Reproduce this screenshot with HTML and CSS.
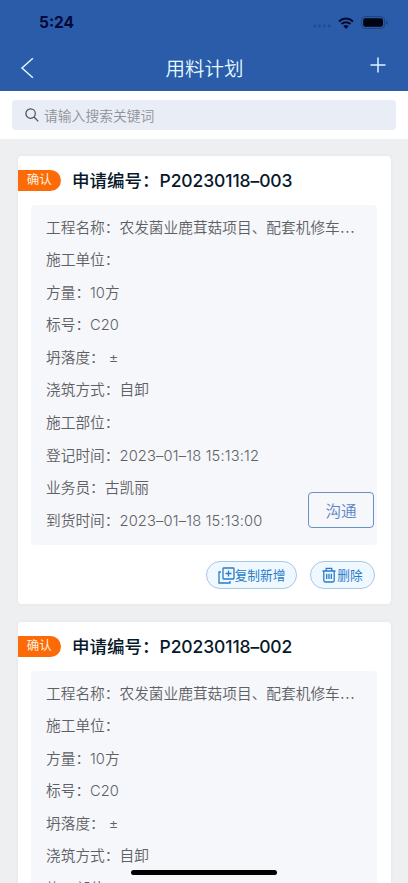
FILE: index.html
```
<!DOCTYPE html>
<html lang="zh-CN">
<head>
<meta charset="utf-8">
<meta name="viewport" content="width=device-width, initial-scale=1">
<title>用料计划</title>
<link rel="stylesheet" href="styles.css">
</head>
<body>
<div class="app">
  <header class="header">
    <div class="status">
      <span class="clock">5:24</span>
      <span class="indicators">
        <svg class="dots" width="18" height="4" viewBox="0 0 18 4"><circle cx="1.8" cy="2" r="1.4"/><circle cx="6.6" cy="2" r="1.4"/><circle cx="11.4" cy="2" r="1.4"/><circle cx="16.2" cy="2" r="1.4"/></svg>
        <svg class="wifi" width="16" height="12" viewBox="0 0 16 12"><path d="M1 4.400a10.200 10.200 0 0 1 14 0M3.500 7a6.600 6.600 0 0 1 9 0" fill="none" stroke="#02092f" stroke-width="2"/><path d="M5.400 9.200a3.900 3.900 0 0 1 5.200 0L8 11.900z" fill="#02092f"/></svg>
        <svg class="battery" width="27" height="13" viewBox="0 0 27 13"><rect x=".6" y=".6" width="23" height="11.8" rx="3.6" fill="none" stroke="#1d4380"/><rect x="2.2" y="2.2" width="19.8" height="8.6" rx="2.2" fill="#000410"/><path d="M25 4.500q1.500.6 1.500 2t-1.500 2z" fill="#1d4380"/></svg>
      </span>
    </div>
    <nav class="nav">
      <svg class="back" width="14" height="22" viewBox="0 0 14 22"><path d="M12.900 1.200L2 11l10.900 9.800"/></svg>
      <h1>用料计划</h1>
      <svg class="add" width="16" height="16" viewBox="0 0 16 16"><path d="M8 .5v15M.5 8h15"/></svg>
    </nav>
  </header>
  <div class="search">
    <div class="field">
      <svg width="14" height="14" viewBox="0 0 14 14"><circle cx="5.600" cy="5.600" r="4.700"/><path d="M9 9l4.300 4.300"/></svg>
      <span>请输入搜索关键词</span>
    </div>
  </div>
  <main class="list">
    <article class="card">
      <div class="card-head"><span class="tag">确认</span><h2>申请编号：<b>P20230118–003</b></h2></div>
      <div class="details">
        <p>工程名称：农发菌业鹿茸菇项目、配套机修车<span class="more">…</span></p>
        <p>施工单位：</p>
        <p>方量：10方</p>
        <p>标号：C20</p>
        <p>坍落度：<span class="range">±</span></p>
        <p>浇筑方式：自卸</p>
        <p>施工部位：</p>
        <p>登记时间：<span class="date">2023–01–18 15:13:12</span></p>
        <p>业务员：古凯丽</p>
        <p>到货时间：<span class="date">2023–01–18 15:13:00</span></p>
        <button class="chat">沟通</button>
      </div>
      <div class="actions">
        <button class="pill copy"><svg width="17" height="17" viewBox="0 0 17 17"><rect x="5" y="1" width="11" height="11" rx=".8"/><path d="M10.500 3.500v6M7.500 6.500h6M3 5H1v11h11v-2"/></svg><span>复制新增</span></button>
        <button class="pill"><svg width="14" height="16" viewBox="0 0 14 16"><path d="M.5 4h13M4.200 4V1.300h5.600V4M1.800 4v9.600q0 1.400 1.400 1.400h7.600q1.400 0 1.400-1.400V4M4.700 6.800v5.200M7 6.800v5.200M9.300 6.800v5.200"/></svg><span>删除</span></button>
      </div>
    </article>
    <article class="card">
      <div class="card-head"><span class="tag">确认</span><h2>申请编号：<b>P20230118–002</b></h2></div>
      <div class="details">
        <p>工程名称：农发菌业鹿茸菇项目、配套机修车<span class="more">…</span></p>
        <p>施工单位：</p>
        <p>方量：10方</p>
        <p>标号：C20</p>
        <p>坍落度：<span class="range">±</span></p>
        <p>浇筑方式：自卸</p>
        <p>施工部位：</p>
      </div>
    </article>
  </main>
  <div class="home-bar"></div>
</div>
</body>
</html>
```
FILE: styles.css
```
* { box-sizing: border-box; }
body, h1, h2, p { margin: 0; }
body { font-family: Inter, "Noto Sans CJK SC", sans-serif; background: #eeeff1; overflow: hidden; }
svg { display: block; flex: none; }
button { font-family: inherit; padding: 0; }
.app { position: relative; height: 883px; overflow: hidden; }
.header { height: 91px; background: #2b5caa; }
.status { display: flex; justify-content: space-between; height: 45px; padding: 0 21px 0 39px; align-items: center; }
.clock { font-size: 15.500px; font-weight: 700; color: #02093a; }
.indicators { display: flex; align-items: center; }
.dots { fill: #204a91; margin: 7px 7px 0 0; }
.wifi { margin-right: 7px; }
.battery { margin-right: -1px; }
.nav { display: flex; align-items: center; justify-content: space-between; height: 46px; padding: 0 22px 0 20px; }
.nav h1 { font-size: 19.500px; font-weight: 350; line-height: 28px; color: #e4fbff; margin: 2px 0 0 5px; }
.back, .add { fill: none; stroke: #d9f8ff; stroke-width: 1.500; }
.back { margin-top: -1px; }
.add { margin-top: -6px; }
.search { height: 48px; padding: 9px 12px; background: #fff; }
.field { display: flex; align-items: center; gap: 5px; height: 30px; padding-left: 13px; border-radius: 4px; background: #e9edf5; font-size: 13.800px; font-weight: 350; color: #8f9298; }
.field svg { fill: none; stroke: #4c5058; stroke-width: 1.200; }
.list { display: flex; flex-direction: column; gap: 18px; padding: 17px 17px 0 17.500px; }
.card { height: 448px; flex: none; background: #fff; border-radius: 4px; padding-top: 14px; box-shadow: 0 0 4px rgba(40, 50, 70, .05); }
.card-head { display: flex; align-items: center; height: 21px; gap: 11px; }
.tag { width: 43.500px; height: 21px; border-radius: 0 11px 11px 0; background: #fc6b08; color: #fff1df; font-size: 12.500px; line-height: 20px; text-align: center; }
.card-head h2 { font-size: 17.500px; line-height: 22px; font-weight: 500; color: #07182b; white-space: nowrap; }
.card-head b { font-weight: 500; letter-spacing: -.1px; }
.details { position: relative; height: 340px; margin: 14px 14px 0 13.500px; padding: 6.500px 0 0 15px; background: #f5f7fb; border-radius: 4px; font-size: 14.700px; font-weight: 350; color: #5f6063; }
.details p { height: 32.600px; line-height: 32.600px; white-space: nowrap; }
.range { margin-left: 4px; }
.more { font-size: 18px; line-height: 1; }
.date { letter-spacing: .16px; }
.chat { position: absolute; right: 3px; bottom: 17px; width: 66px; height: 36px; border: 1px solid #6b8fca; border-radius: 4px; background: transparent; color: #5f84c6; font-size: 15.600px; font-weight: 350; }
.actions { display: flex; justify-content: flex-end; gap: 13px; padding: 16px 16px 0 0; }
.pill { display: flex; align-items: center; justify-content: center; width: 65px; height: 28px; border: 1px solid #a9c6e5; border-radius: 14px; background: #f0f8ff; color: #267bc9; font-size: 12.700px; }
.pill svg { fill: none; stroke: #267bc9; stroke-width: 1.300; margin-right: 1px; }
.pill span { margin-top: -2px; }
.pill.copy { width: 91px; }
.pill.copy svg { margin-right: 0; }
.home-bar { position: absolute; left: 131px; bottom: 8px; width: 146px; height: 5px; border-radius: 3px; background: #000; }
```
